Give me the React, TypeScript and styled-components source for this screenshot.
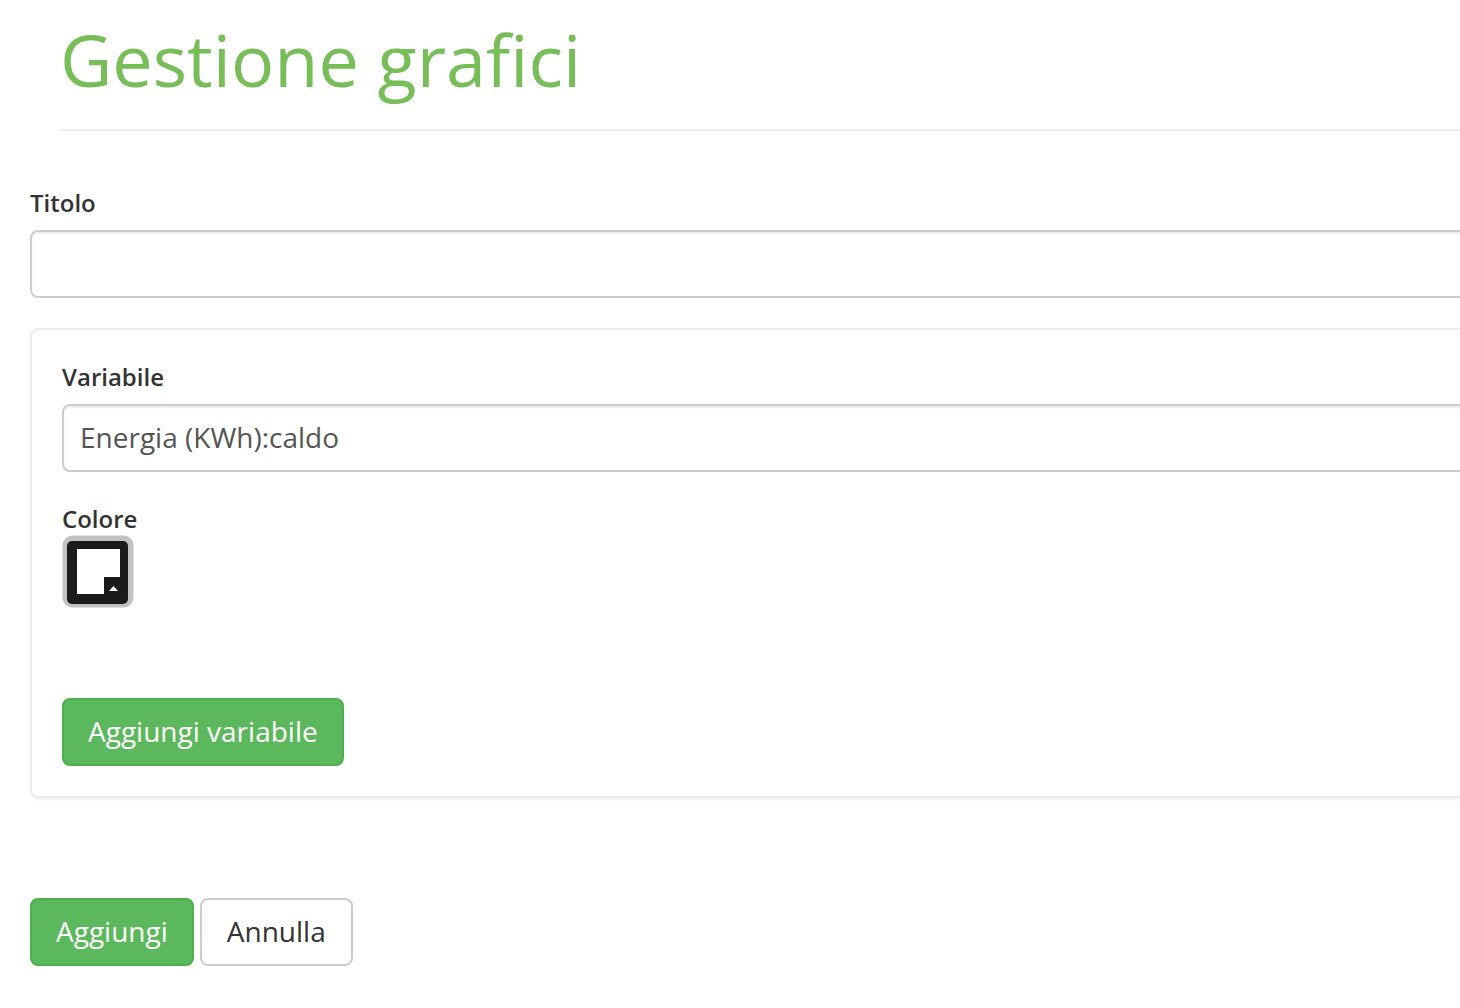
import React from "react";
import styled, { createGlobalStyle } from "styled-components";

const GlobalStyle = createGlobalStyle`
  html, body {
    margin: 0;
    padding: 0;
    background: #ffffff;
    overflow: hidden;
  }
  body {
    font-family: "Open Sans", "Liberation Sans", sans-serif;
    color: #333333;
  }
  * { box-sizing: border-box; }
`;

const Page = styled.div`
  width: 1560px;
  height: 1008px;
`;

const PageHeader = styled.header`
  margin-left: 60px;
  padding-top: 20px;
  padding-bottom: 30px;
  border-bottom: 2px solid #eeeeee;
`;

const Title = styled.h1`
  margin: 0;
  font-size: 72px;
  line-height: 79px;
  font-weight: 400;
  color: #77bd58;
`;

const Form = styled.form`
  margin-left: 30px;
  padding-top: 55px;
  display: flex;
  flex-direction: column;
`;

const FormGroup = styled.div<{ $gap?: number }>`
  display: flex;
  flex-direction: column;
  margin-bottom: ${(p) => (p.$gap ?? 30)}px;
`;

const Label = styled.label`
  font-size: 24px;
  line-height: 34px;
  font-weight: 600;
  color: #333333;
  margin-bottom: 10px;
`;

const TextInput = styled.input`
  height: 68px;
  width: 100%;
  border: 2px solid #cccccc;
  border-radius: 8px;
  padding: 10px 16px 12px;
  font-family: "Open Sans", "Liberation Sans", sans-serif;
  font-size: 28px;
  line-height: 40px;
  color: #555555;
  background: #ffffff;
  box-shadow: inset 0 2px 2px rgba(0, 0, 0, 0.075);
  outline: none;
`;

const Panel = styled.div`
  border: 2px solid #ececec;
  border-radius: 8px;
  box-shadow: 0 2px 2px rgba(0, 0, 0, 0.05);
  padding: 30px;
  display: flex;
  flex-direction: column;
  align-items: flex-start;
  margin-bottom: 100px;
`;

const PanelGroup = styled(FormGroup)`
  align-self: stretch;
`;

const ColorLabel = styled(Label)`
  margin-bottom: 0;
`;

const Swatch = styled.div`
  width: 72px;
  height: 73px;
  margin-top: -1px;
`;

const Button = styled.button<{ $variant?: "success" | "default" }>`
  height: 68px;
  padding: 0 24px 2px;
  border-radius: 8px;
  font-family: "Open Sans", "Liberation Sans", sans-serif;
  font-size: 28px;
  line-height: 40px;
  font-weight: 400;
  cursor: pointer;
  border: 2px solid ${(p) => (p.$variant === "success" ? "#4cae4c" : "#cccccc")};
  background: ${(p) => (p.$variant === "success" ? "#5cb85c" : "#ffffff")};
  color: ${(p) => (p.$variant === "success" ? "#ffffff" : "#333333")};
`;

const CancelButton = styled(Button)`
  padding: 0 25px 2px;
`;

const AddVariableButton = styled(Button)`
  margin-top: 90px;
`;

const Actions = styled.div`
  display: flex;
  gap: 6px;
`;

function ColorSwatch() {
  return (
    <Swatch>
      <svg width="72" height="73" viewBox="0 0 72 73">
        <rect x="0.5" y="0.5" width="71" height="72" rx="10" fill="#c2c2c2" />
        <rect x="5" y="6" width="61" height="63" rx="5" fill="#1b1b1b" />
        <path d="M15 14 H58 V42 H42 V59 H15 Z" fill="#ffffff" />
        <polygon points="47,56 56,56 51.5,51" fill="#ffffff" />
      </svg>
    </Swatch>
  );
}

export default function App() {
  return (
    <Page>
      <GlobalStyle />
      <PageHeader>
        <Title>Gestione grafici</Title>
      </PageHeader>
      <Form onSubmit={(e) => e.preventDefault()}>
        <FormGroup>
          <Label>Titolo</Label>
          <TextInput type="text" defaultValue="" />
        </FormGroup>
        <Panel>
          <PanelGroup>
            <Label>Variabile</Label>
            <TextInput type="text" defaultValue="Energia (KWh):caldo" />
          </PanelGroup>
          <PanelGroup $gap={0}>
            <ColorLabel>Colore</ColorLabel>
            <ColorSwatch />
          </PanelGroup>
          <AddVariableButton type="button" $variant="success">
            Aggiungi variabile
          </AddVariableButton>
        </Panel>
        <Actions>
          <Button type="submit" $variant="success">
            Aggiungi
          </Button>
          <CancelButton type="button">Annulla</CancelButton>
        </Actions>
      </Form>
    </Page>
  );
}
